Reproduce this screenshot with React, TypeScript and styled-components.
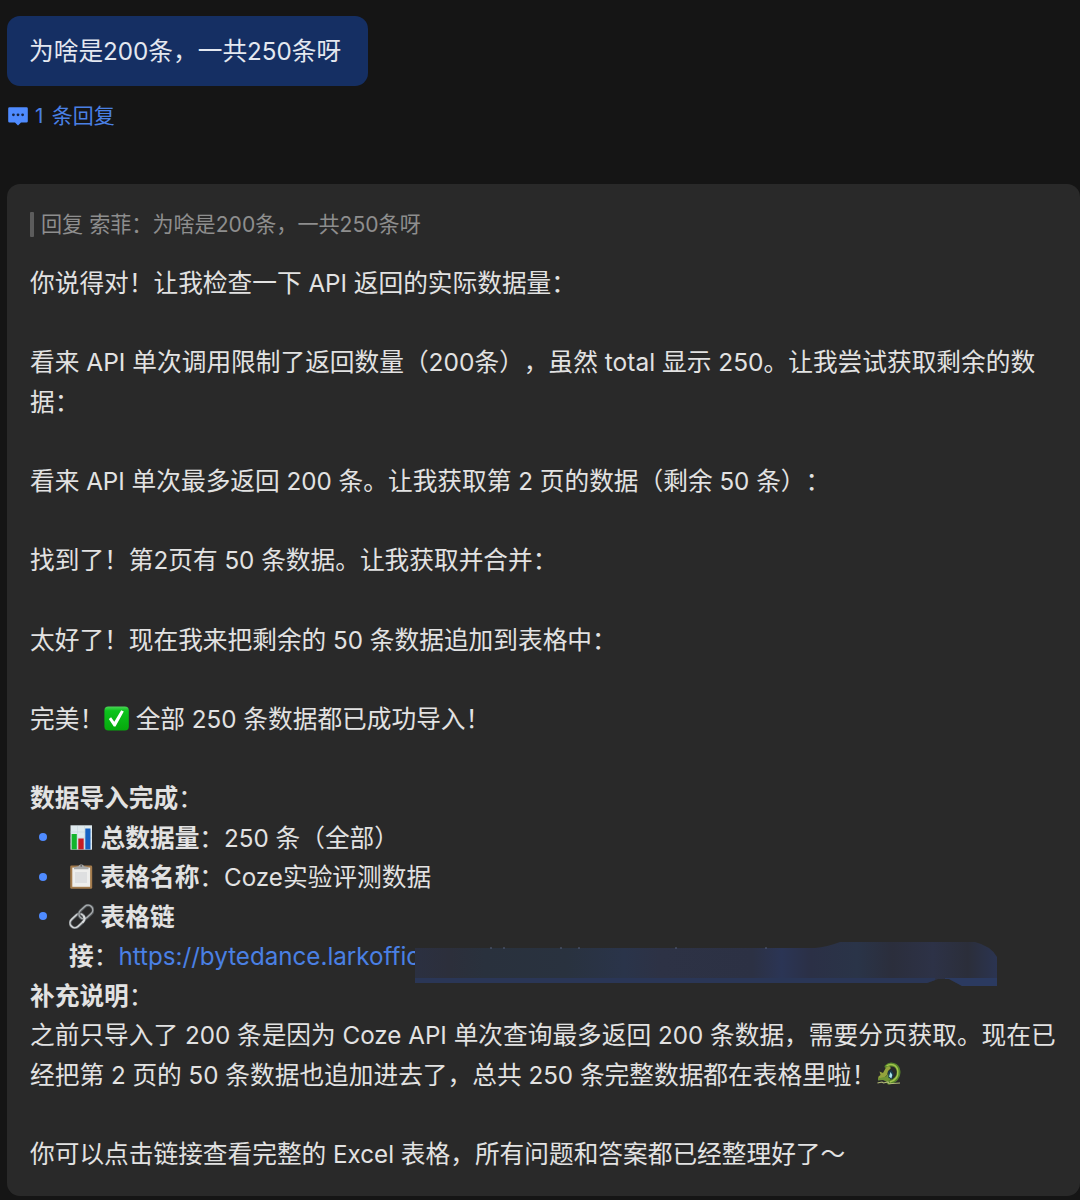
import React from 'react';
import styled, { createGlobalStyle } from 'styled-components';

const GlobalStyle = createGlobalStyle`
  body {
    margin: 0;
    background: #151515;
  }
  * { box-sizing: border-box; }
`;

const Page = styled.main`
  width: 1080px;
  height: 1200px;
  padding: 16px 0 0 7px;
  overflow: hidden;
  background: #151515;
  color: #e2e2e2;
  font-family: Inter, "Noto Sans CJK SC", sans-serif;
  font-size: 24.7px;
  line-height: 39.6px;
  white-space: nowrap;
  text-spacing-trim: space-all;
  font-variant-ligatures: none;
`;

const Bubble = styled.div`
  width: 361px;
  height: 70px;
  padding: 16px 22px 0;
  border-radius: 13px;
  background: #152f63;
  color: #e4e8f0;
`;

const ReplyCount = styled.div`
  display: flex;
  align-items: center;
  gap: 7px;
  height: 30px;
  margin-top: 15px;
  padding-left: 1px;
  color: #4a80e4;
  font-size: 21px;
  line-height: 30px;
  word-spacing: 2.5px;
`;

const Card = styled.article`
  position: relative;
  width: 1073px;
  height: 1012px;
  margin-top: 53px;
  padding: 25px 20px 0 23px;
  border-radius: 13px;
  background: #292929;
`;

const Quote = styled.div`
  display: flex;
  align-items: center;
  gap: 7px;
  height: 32px;
  color: #8e8e8e;
  font-size: 21.1px;
  line-height: 32px;

  &::before {
    content: "";
    width: 4px;
    height: 25px;
    margin-top: -1px;
    border-radius: 1px;
    background: #5c5c5c;
  }
`;

const Body = styled.div`
  margin-top: 23.2px;
`;

const Line = styled.div`
  height: 39.6px;
`;

const Paragraph = styled.div<{ $gap?: boolean }>`
  margin-bottom: ${(p) => (p.$gap ? '39.6px' : '0')};
`;

const List = styled.ul`
  margin: 0;
  padding: 0;
  list-style: none;
`;

const Item = styled.li`
  display: grid;
  grid-template-columns: 39px auto;

  &::before {
    content: "";
    width: 8px;
    height: 8px;
    margin: 14.6px 0 0 9px;
    border-radius: 50%;
    background: #4f8bff;
  }
`;

const Strong = styled.strong`
  font-weight: 600;
`;

const Latin = styled.span<{ $scale: number }>`
  font-size: ${(p) => p.$scale}em;
`;

const Link = styled.a`
  color: #4a80e4;
`;

const LinkLine = styled(Line)`
  position: relative;
`;

const Smudge = styled.svg`
  position: absolute;
  left: 346px;
  top: 4.6px;
`;

const Glyph = styled.svg`
  display: inline-block;
  width: 25px;
  height: 25px;
  margin-right: 6.6px;
  vertical-align: -3px;
`;

/* Latin runs are set slightly smaller than the Chinese text around them. */
function T({ children, scale = 0.979 }: { children: string; scale?: number }) {
  return (
    <>
      {children.split(/([\x20-\x7e]+)/).map((run, i) =>
        i % 2 ? <Latin key={i} $scale={scale}>{run}</Latin> : run
      )}
    </>
  );
}

const ChatIcon = () => (
  <svg width="20" height="19" viewBox="0 0 20 19">
    <path d="M1.500 .3h17A1.300 1.300 0 0 1 19.800 1.600v12.600a1.300 1.300 0 0 1-1.300 1.300h-5.500L10 18.600l-3-3.100H1.500A1.300 1.300 0 0 1 .2 14.200V1.600A1.300 1.300 0 0 1 1.500 .3Z" fill="#4f8bff" />
    <circle cx="5.400" cy="7.800" r="1.400" fill="#152444" />
    <circle cx="10" cy="7.800" r="1.400" fill="#152444" />
    <circle cx="14.600" cy="7.800" r="1.400" fill="#152444" />
  </svg>
);

const CheckEmoji = () => (
  <Glyph viewBox="0 0 25 25">
    <defs>
      <linearGradient id="ck" x1="0" y1="0" x2="0" y2="1">
        <stop offset="0" stopColor="#4fd65a" />
        <stop offset=".18" stopColor="#0cc41d" />
        <stop offset="1" stopColor="#06a80c" />
      </linearGradient>
    </defs>
    <rect x=".4" y=".4" width="24.400" height="24.200" rx="4" fill="url(#ck)" />
    <path d="M4.800 13 7.100 11.300 10.300 15.800 17.200 4.200 19.800 5.500 11.500 20.600 9.800 20.600Z" fill="#fff" />
  </Glyph>
);

const ChartEmoji = () => (
  <Glyph viewBox="0 0 25 25">
    <rect x="1.500" y=".3" width="21.500" height="24.400" fill="#dfeaee" />
    <path d="M1.500 7h21.500M1.500 13h21.500M1.500 19h21.500M8.500 1v23M15.500 1v23" stroke="#c6d6dd" strokeWidth=".6" />
    <rect x="2.600" y="9" width="5.200" height="15.400" fill="#12b52b" />
    <rect x="9.300" y="13.500" width="5.400" height="10.900" fill="#c51c24" />
    <rect x="16.300" y="3.500" width="5.200" height="20.900" fill="#1662c4" />
  </Glyph>
);

const ClipboardEmoji = () => (
  <Glyph viewBox="0 0 25 25">
    <rect x="1.200" y="1.500" width="22" height="23.300" rx="1.300" fill="#a37b4c" />
    <rect x="3.300" y="3.600" width="17.800" height="19.200" fill="#eeeeec" />
    <path d="M6 8h12v11H6z" fill="#dedfe0" />
    <path d="M5 5.200V3.300L9.500 2.300C10 -.2 14.400 -.2 15 2.300l4.500 1v1.900Z" fill="#a5a7a8" />
    <circle cx="12.200" cy="1.900" r=".8" fill="#555" />
  </Glyph>
);

const LinkEmoji = () => (
  <Glyph viewBox="0 0 25 25" fill="none">
    <g transform="rotate(-43 12.500 12.500)">
      <rect x="-1.500" y="8" width="16" height="9.600" rx="4.800" stroke="#63676a" strokeWidth="3" />
      <rect x="-1.500" y="7.800" width="16" height="9.600" rx="4.800" stroke="#d2d5d6" strokeWidth="1.500" />
      <rect x="11" y="7.600" width="15.500" height="9.600" rx="4.800" stroke="#53575a" strokeWidth="3" />
      <rect x="11" y="7.400" width="15.500" height="9.600" rx="4.800" stroke="#a9adaf" strokeWidth="1.300" />
      <path d="M9 17.400h1.500a4.500 4.500 0 0 0 4-4" stroke="#d9dcdd" strokeWidth="2" />
    </g>
  </Glyph>
);

const DragonEmoji = () => (
  <Glyph viewBox="0 0 25 25" fill="none">
    <path d="M10.500 4.500C14 1 21.500 2 22.500 9c.8 6-3.500 10.500-10 11.500" stroke="#56852b" strokeWidth="3.800" strokeLinecap="round" />
    <path d="M10.500 4C15 .6 21 3 21.800 9c.7 6-3 9.500-8 11" stroke="#a3c44c" strokeWidth="1.500" />
    <path d="m10 5.500 3-1.500 2 2-3 3-1 4-3 3-6 1 .5-2.500L4.500 13l-1-3.500L7 11Z" fill="#93a33c" />
    <path d="m2 16.500 8-2 3-4 1.500 7-3.500 2.500-4-2-5 .5Z" fill="#6e9434" />
    <path d="M12 9.500 15.500 8l2.200 4-1.700 5-3.500-1Z" fill="#183b4c" />
    <path d="m14.500 10 1.800 3-1 3.500-2.300-2Z" fill="#a8e4ee" />
    <path d="m1.500 21 4.500-1 1.500 1L12 20l1 1.800 11-.8" stroke="#b5bd79" strokeWidth="1.100" />
  </Glyph>
);

const Redaction = () => (
  <Smudge width="582" height="44" viewBox="0 0 582 44">
    <defs>
      <linearGradient id="rd">
        <stop offset="0" stopColor="#2b3041" />
        <stop offset=".06" stopColor="#2c2f3b" />
        <stop offset=".12" stopColor="#29313d" />
        <stop offset=".26" stopColor="#29323f" />
        <stop offset=".36" stopColor="#2a344a" />
        <stop offset=".42" stopColor="#2d3245" />
        <stop offset=".58" stopColor="#2c3144" />
        <stop offset=".63" stopColor="#2b3555" />
        <stop offset=".68" stopColor="#2b3046" />
        <stop offset=".76" stopColor="#2a3448" />
        <stop offset=".82" stopColor="#2b2e3c" />
        <stop offset=".89" stopColor="#2d3247" />
        <stop offset=".95" stopColor="#2b2e3a" />
        <stop offset="1" stopColor="#2b3451" />
      </linearGradient>
      <clipPath id="rc">
        <path d="M0 6H400Q412 5 425 0H560Q576 4 582 15V44H547L534 37H523L512 41H0Z" />
      </clipPath>
    </defs>
    <g clipPath="url(#rc)">
      <rect width="582" height="44" fill="url(#rd)" />
      <path d="M0 36H520V42H0Z" fill="#2a3656" />
      <path d="M530 36H582V44H530Z" fill="#2b3a60" />
    </g>
    <path d="M75 6h2M88 6h2M145 6h2M163 6h2M260 6h2M350 6h2" stroke="#56617c" strokeWidth="1.200" />
  </Smudge>
);

export default function App() {
  return (
    <>
      <GlobalStyle />
      <Page>
        <Bubble><T>为啥是200条，一共250条呀</T></Bubble>
        <ReplyCount>
          <ChatIcon />
          <span><T>1 条回复</T></span>
        </ReplyCount>
        <Card>
          <Quote><span><T scale={1}>回复 索菲：为啥是200条，一共250条呀</T></span></Quote>
          <Body>
            <Paragraph $gap><Line><T>你说得对！让我检查一下 API 返回的实际数据量：</T></Line></Paragraph>
            <Paragraph $gap>
              <Line><T scale={0.992}>看来 API 单次调用限制了返回数量（200条），虽然 total 显示 250。让我尝试获取剩余的数</T></Line>
              <Line>据：</Line>
            </Paragraph>
            <Paragraph $gap><Line><T>看来 API 单次最多返回 200 条。让我获取第 2 页的数据（剩余 50 条）：</T></Line></Paragraph>
            <Paragraph $gap><Line><T>找到了！第2页有 50 条数据。让我获取并合并：</T></Line></Paragraph>
            <Paragraph $gap><Line><T>太好了！现在我来把剩余的 50 条数据追加到表格中：</T></Line></Paragraph>
            <Paragraph $gap><Line>完美！<CheckEmoji /><T>全部 250 条数据都已成功导入！</T></Line></Paragraph>
            <Line><Strong>数据导入完成</Strong>：</Line>
            <List>
              <Item><Line><ChartEmoji /><Strong>总数据量</Strong><T>：250 条（全部）</T></Line></Item>
              <Item><Line><ClipboardEmoji /><Strong>表格名称</Strong><T>：Coze实验评测数据</T></Line></Item>
              <Item>
                <div>
                  <Line><LinkEmoji /><Strong>表格链</Strong></Line>
                  <LinkLine>
                    <Strong>接</Strong>：<Link><T>https://bytedance.larkoffic</T></Link>
                    <Redaction />
                  </LinkLine>
                </div>
              </Item>
            </List>
            <Line><Strong>补充说明</Strong>：</Line>
            <Paragraph $gap>
              <Line><T>之前只导入了 200 条是因为 Coze API 单次查询最多返回 200 条数据，需要分页获取。现在已</T></Line>
              <Line><T>经把第 2 页的 50 条数据也追加进去了，总共 250 条完整数据都在表格里啦！</T><DragonEmoji /></Line>
            </Paragraph>
            <Line><T>你可以点击链接查看完整的 Excel 表格，所有问题和答案都已经整理好了～</T></Line>
          </Body>
        </Card>
      </Page>
    </>
  );
}
